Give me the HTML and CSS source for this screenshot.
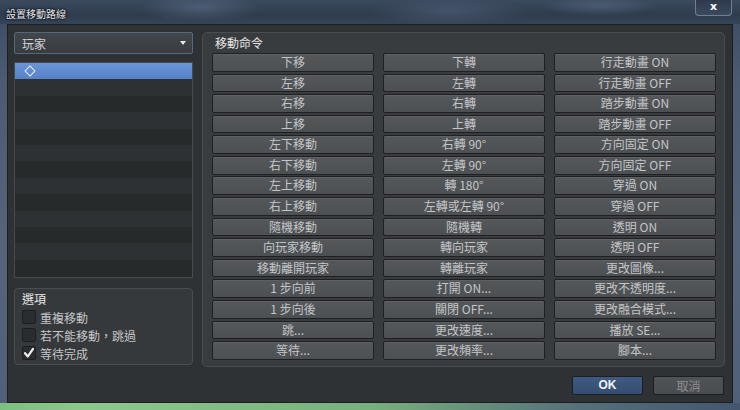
FILE: index.html
```html
<!DOCTYPE html>
<html>
<head>
<meta charset="utf-8">
<link rel="stylesheet" href="styles.css">
</head>
<body>
<div class="window">
  <div class="titlebar">
    <span class="title">設置移動路線</span>
    <span class="close">x</span>
  </div>
  <div class="client">
    <div class="main">
      <div class="leftcol">
        <div class="dropdown"><span>玩家</span><span class="arrow"></span></div>
        <div class="list">
          <div class="row sel"><span class="diamond"></span></div>
          <div class="row"></div><div class="row"></div><div class="row"></div>
          <div class="row"></div><div class="row"></div><div class="row"></div>
          <div class="row"></div><div class="row"></div><div class="row"></div>
          <div class="row"></div><div class="row"></div><div class="row"></div>
        </div>
        <div class="options">
          <div class="opt-title">選項</div>
          <div class="check"><span class="box"></span><span>重複移動</span></div>
          <div class="check"><span class="box"></span><span>若不能移動，跳過</span></div>
          <div class="check"><span class="box checked"><svg viewBox="0 0 14 14" width="14" height="14"><path d="M3 7.2 L5.8 10.5 L11 2.8" fill="none" stroke="#f2f2f2" stroke-width="2.2" stroke-linecap="round" stroke-linejoin="round"/></svg></span><span>等待完成</span></div>
        </div>
      </div>
      <div class="commands">
        <div class="cmd-title">移動命令</div>
        <div class="grid">
          <div class="btn">下移</div><div class="btn">下轉</div><div class="btn">行走動畫 ON</div>
          <div class="btn">左移</div><div class="btn">左轉</div><div class="btn">行走動畫 OFF</div>
          <div class="btn">右移</div><div class="btn">右轉</div><div class="btn">踏步動畫 ON</div>
          <div class="btn">上移</div><div class="btn">上轉</div><div class="btn">踏步動畫 OFF</div>
          <div class="btn">左下移動</div><div class="btn">右轉 90°</div><div class="btn">方向固定 ON</div>
          <div class="btn">右下移動</div><div class="btn">左轉 90°</div><div class="btn">方向固定 OFF</div>
          <div class="btn">左上移動</div><div class="btn">轉 180°</div><div class="btn">穿過 ON</div>
          <div class="btn">右上移動</div><div class="btn">左轉或左轉 90°</div><div class="btn">穿過 OFF</div>
          <div class="btn">隨機移動</div><div class="btn">隨機轉</div><div class="btn">透明 ON</div>
          <div class="btn">向玩家移動</div><div class="btn">轉向玩家</div><div class="btn">透明 OFF</div>
          <div class="btn">移動離開玩家</div><div class="btn">轉離玩家</div><div class="btn">更改圖像...</div>
          <div class="btn">1 步向前</div><div class="btn">打開 ON...</div><div class="btn">更改不透明度...</div>
          <div class="btn">1 步向後</div><div class="btn">關閉 OFF...</div><div class="btn">更改融合模式...</div>
          <div class="btn">跳...</div><div class="btn">更改速度...</div><div class="btn">播放 SE...</div>
          <div class="btn">等待...</div><div class="btn">更改頻率...</div><div class="btn">腳本...</div>
        </div>
      </div>
    </div>
    <div class="footer">
      <div class="dlg ok">OK</div>
      <div class="dlg cancel">取消</div>
    </div>
  </div>
</div>
</body>
</html>
```

FILE: styles.css
```css
* { box-sizing: border-box; }
html, body { margin: 0; padding: 0; }
body {
  width: 740px;
  height: 410px;
  overflow: hidden;
  font-family: "Noto Sans CJK TC", "Noto Sans", "Liberation Sans", sans-serif;
  font-size: 12px;
  background: #2a3340;
}
.window {
  width: 740px;
  height: 410px;
  display: flex;
  flex-direction: column;
  padding: 0 7px 7px 7px;
  background:
    linear-gradient(90deg, #7cc07e 0%, #8cc88c 12%, #78b07e 50%, #56707a 78%, #44566e 100%) bottom / 100% 7px no-repeat,
    linear-gradient(180deg, #3a4a60 0%, #4c5b72 20%, #56647a 60%, #4f6078 100%);
}
.titlebar {
  height: 24px;
  flex: none;
  position: relative;
  display: flex;
  align-items: center;
  margin: 0 -7px;
  padding-left: 6px;
  padding-top: 2px;
  background:
    radial-gradient(ellipse 60px 14px at 200px 8px, rgba(120,140,170,0.35), transparent),
    radial-gradient(ellipse 80px 14px at 450px 12px, rgba(110,130,160,0.3), transparent),
    radial-gradient(ellipse 60px 10px at 600px 6px, rgba(120,140,170,0.3), transparent),
    linear-gradient(180deg, #3b4a5e 0%, #2f3c4e 60%, #354457 100%);
}
.title {
  color: #e6e9ee;
  font-size: 10px;
  text-shadow: 0 0 3px #000, 0 0 2px #000;
}
.close {
  position: absolute;
  right: 8px;
  top: 0;
  width: 37px;
  height: 16px;
  border: 1px solid #6f7f96;
  border-top: none;
  border-radius: 0 0 4px 4px;
  background: linear-gradient(180deg, #2e3a4c, #3c4a5e);
  color: #fff;
  font-family: "DejaVu Sans", sans-serif;
  font-weight: bold;
  font-size: 11px;
  line-height: 13px;
  text-align: center;
}
.client {
  flex: 1;
  background: #2f3234;
  border: 1px solid #1c1e20;
  padding: 7px 7px 0 6px;
  display: flex;
  flex-direction: column;
}
.main {
  display: flex;
  gap: 9px;
  height: 335px;
}
.leftcol {
  width: 181px;
  display: flex;
  flex-direction: column;
}
.dropdown {
  height: 22px;
  border: 1px solid #56687d;
  border-radius: 2px;
  background: linear-gradient(180deg, #41464b, #383c40);
  color: #d0d3d6;
  font-size: 12px;
  display: flex;
  align-items: center;
  justify-content: space-between;
  padding: 0 6px 0 7px;
}
.arrow {
  width: 0; height: 0;
  border-left: 3.5px solid transparent;
  border-right: 3.5px solid transparent;
  border-top: 4px solid #e8e8e8;
}
.list {
  margin-top: 8px;
  height: 216px;
  border: 1px solid #47494b;
  background: #26292a;
  display: flex;
  flex-direction: column;
  padding: 0;
}
.row {
  height: 16.4px;
  flex: none;
}
.row:nth-child(even) { background: #2e3133; }
.row:nth-child(odd) { background: #262a2b; }
.row.sel {
  background: linear-gradient(180deg, #6a95d8, #5682c8);
  display: flex;
  align-items: center;
  padding-left: 11px;
}
.diamond {
  width: 8px;
  height: 8px;
  border: 1.3px solid #e8eefa;
  transform: rotate(45deg);
}
.options {
  margin-top: 10px;
  height: 77px;
  border: 1px solid #4a4d50;
  border-radius: 4px;
  background: #36393c;
  padding: 2px 7px 0 7px;
}
.opt-title {
  color: #e6e6e6;
  font-size: 12px;
  line-height: 16px;
  height: 17px;
}
.check {
  display: flex;
  align-items: center;
  gap: 4px;
  height: 18px;
  color: #c4c6c8;
  font-size: 12px;
}
.box {
  width: 14px;
  height: 14px;
  border: 1px solid #1c1e1f;
  border-radius: 2px;
  background: #2a2d2f;
  display: inline-flex;
}
.box svg { display: block; margin: -1px; }
.commands {
  width: 523px;
  height: 335px;
  border: 1px solid #4b4e51;
  border-radius: 5px;
  background: #393c3f;
  padding: 0 8px 0 9px;
}
.cmd-title {
  height: 20px;
  color: #e6e6e6;
  font-size: 12px;
  line-height: 20px;
  padding-left: 3px;
}
.grid {
  display: grid;
  grid-template-columns: repeat(3, 162px);
  column-gap: 9px;
  grid-auto-rows: 18.7px;
  row-gap: 1.9px;
}
.btn {
  border: 1px solid #1e2022;
  border-radius: 2px;
  background: linear-gradient(180deg, #55585b 0%, #4d5053 100%);
  box-shadow: inset 0 1px 0 rgba(255,255,255,0.06);
  color: #c3c5c7;
  font-size: 12px;
  line-height: 16px;
  text-align: center;
  white-space: nowrap;
}
.footer {
  display: flex;
  justify-content: flex-end;
  gap: 10px;
  margin-top: 9px;
  padding-right: 1px;
}
.dlg {
  width: 71px;
  height: 19px;
  border: 1px solid #1c1e20;
  border-radius: 2px;
  text-align: center;
  font-size: 12px;
  line-height: 17px;
}
.ok {
  background: linear-gradient(180deg, #3f5b82, #344d70);
  color: #f0f3f8;
  font-family: "Liberation Sans", "Noto Sans CJK TC", sans-serif;
  font-weight: bold;
}
.cancel {
  background: linear-gradient(180deg, #505356, #4a4d50);
  color: #8c8e90;
}
```
